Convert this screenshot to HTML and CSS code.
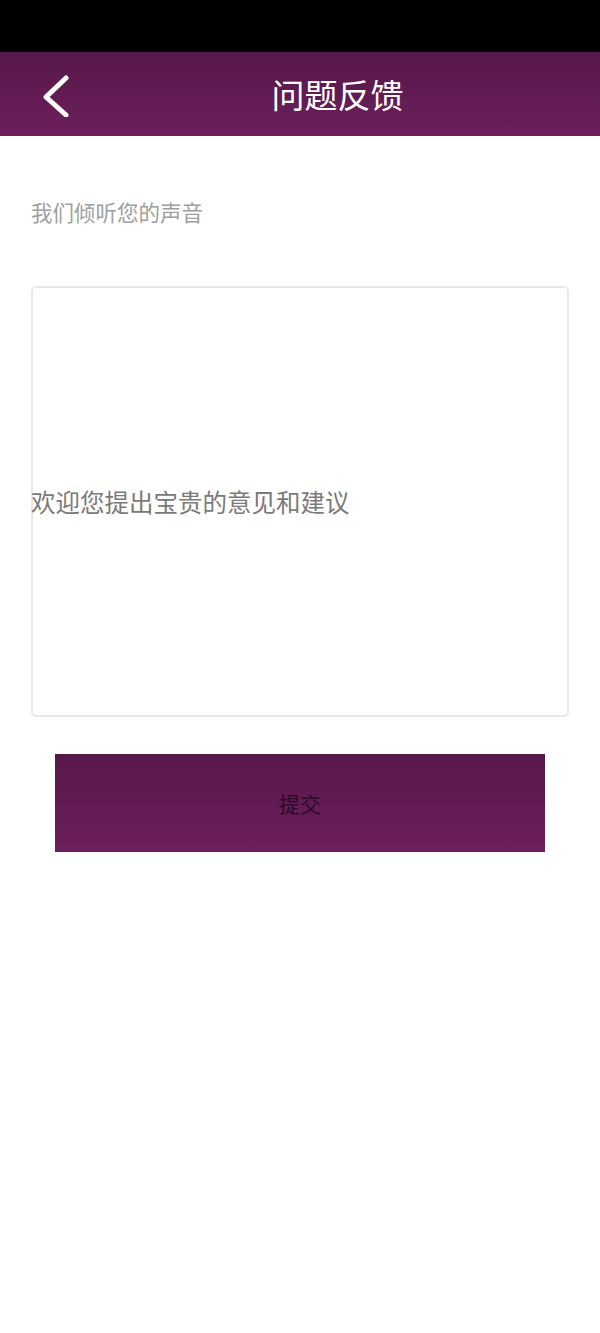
FILE: index.html
```html
<!DOCTYPE html>
<html lang="zh-CN">
<head>
<meta charset="utf-8">
<title>问题反馈</title>
<link rel="stylesheet" href="styles.css">
</head>
<body>
<div class="statusbar"></div>
<header class="topbar">
  <div class="back">
    <svg width="30" height="44" viewBox="0 0 30 44">
      <polyline points="24,5 4,24 24,42" fill="none" stroke="#ffffff" stroke-width="5" stroke-linecap="round" stroke-linejoin="round"/>
    </svg>
  </div>
  <h1 class="title">问题反馈</h1>
</header>
<main class="content">
  <p class="subtitle">我们倾听您的声音</p>
  <div class="textbox">
    <span class="placeholder">欢迎您提出宝贵的意见和建议</span>
  </div>
  <div class="submit">提交</div>
</main>
</body>
</html>
```
FILE: styles.css
```css
html, body {
  margin: 0;
  padding: 0;
  background: #ffffff;
  font-family: "Noto Sans CJK SC", "Noto Sans", sans-serif;
}
.statusbar {
  height: 52px;
  background: #000000;
}
.topbar {
  height: 84px;
  display: flex;
  align-items: center;
  background: linear-gradient(to bottom, #561848, #6c1f5d);
}
.back {
  width: 75px;
  display: flex;
  justify-content: flex-start;
  padding-left: 42px;
  box-sizing: border-box;
  align-items: center;
}
.back svg {
  display: block;
  margin-top: 2px;
}
.title {
  flex: 1;
  margin: 0;
  text-align: center;
  color: #ffffff;
  font-size: 33px;
  font-weight: 400;
  line-height: 40px;
}
.content {
  padding: 0 31px;
  display: flex;
  flex-direction: column;
}
.subtitle {
  margin: 61px 0 0;
  font-size: 21.5px;
  line-height: 30px;
  color: #a0a0a0;
}
.textbox {
  margin-top: 59px;
  height: 431px;
  border: 2px solid #e8e8e8;
  border-radius: 5px;
  box-sizing: border-box;
  display: flex;
  align-items: center;
}
.placeholder {
  margin-left: -2px;
  font-size: 24.5px;
  line-height: 30px;
  color: #7a7a7a;
}
.submit {
  margin: 37px 24px 0;
  height: 98px;
  display: flex;
  align-items: center;
  justify-content: center;
  background: linear-gradient(to bottom, #571848, #6c1f5d);
  color: #2a0a25;
  font-size: 21px;
}
```
